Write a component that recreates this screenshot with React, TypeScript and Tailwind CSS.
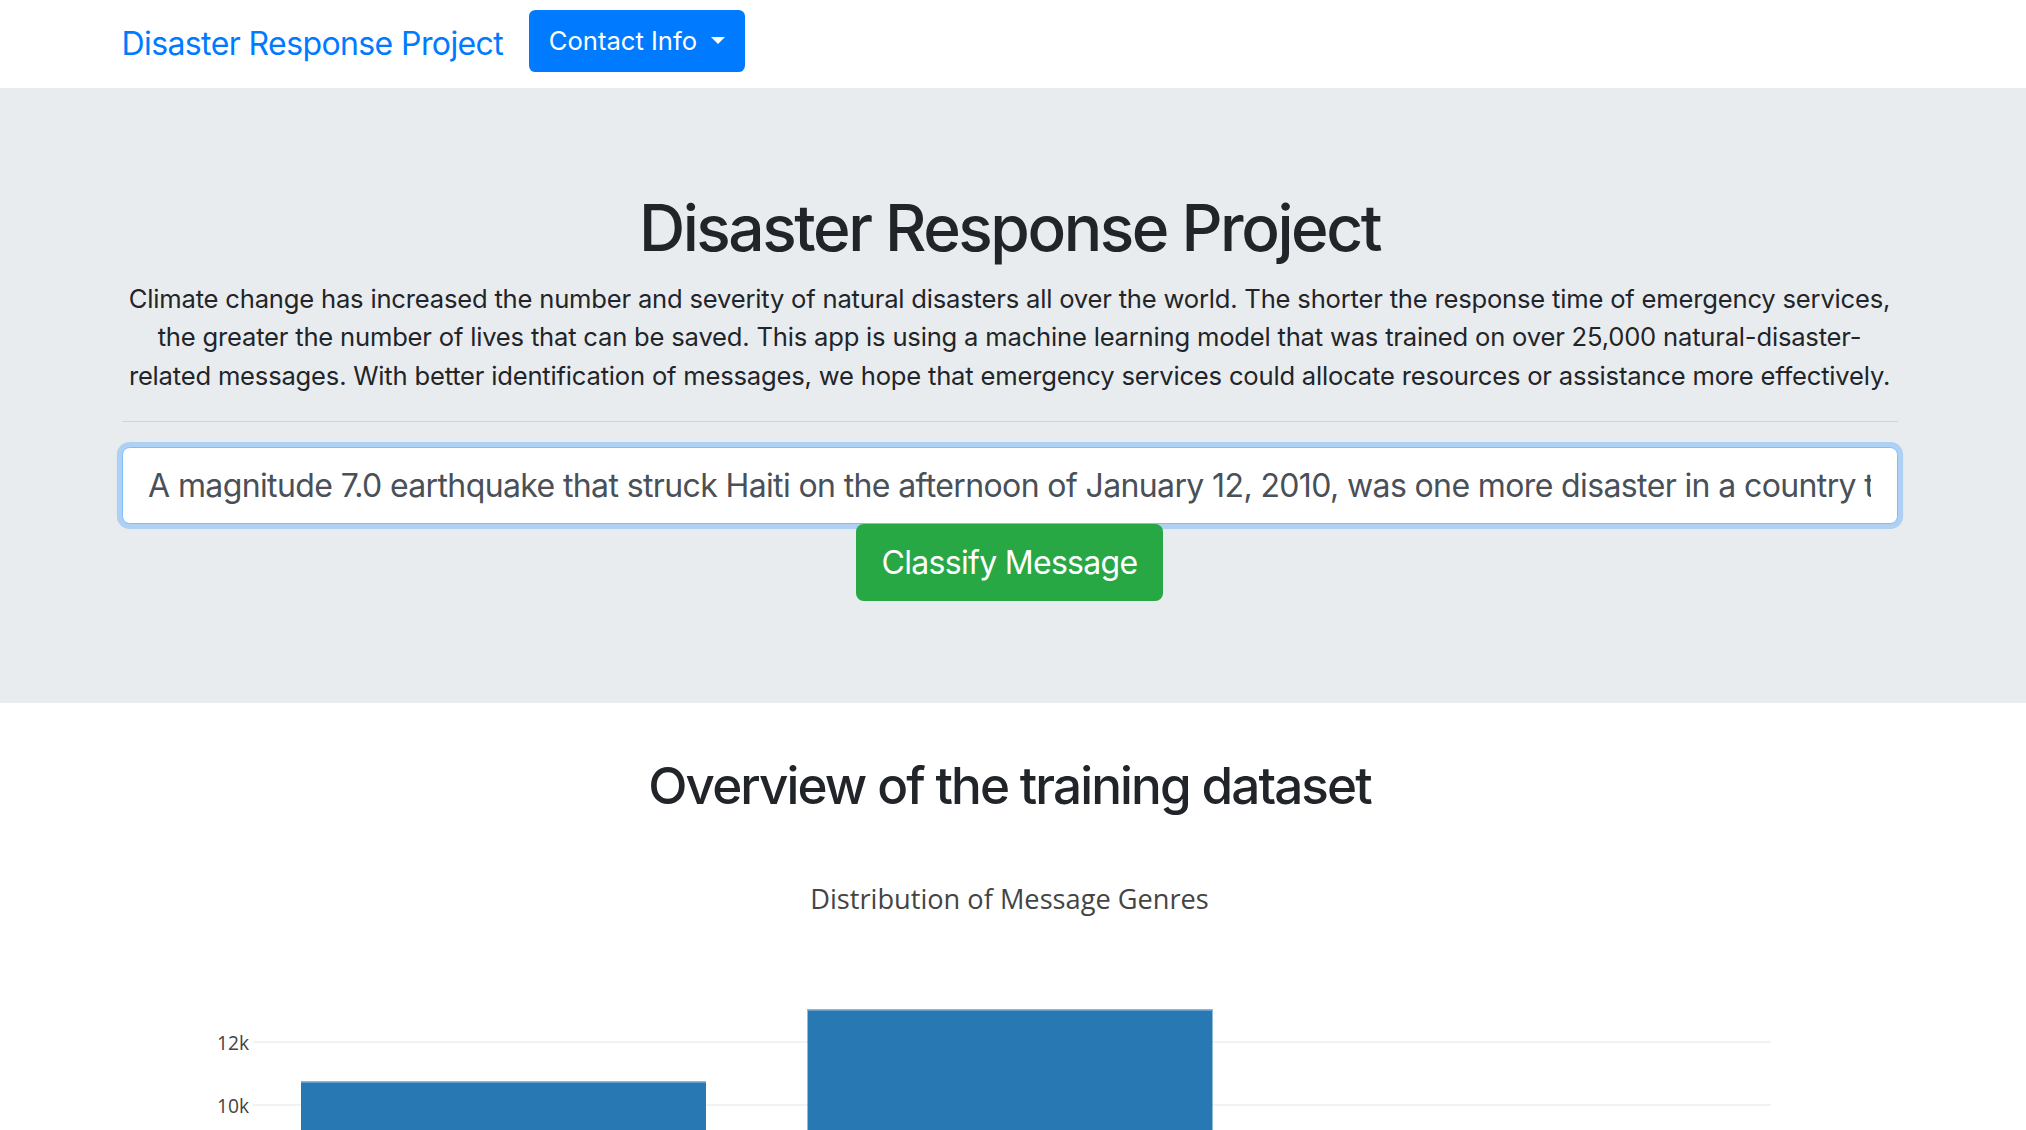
import { useState } from 'react';

const sans = 'font-["Inter","Liberation_Sans",sans-serif]';

const NavBar = () => {
  return (
    <nav className="h-[88px] bg-white pr-[7px]">
      <div className="mx-auto flex h-full w-[1776px] items-center">
        <a className={`${sans} mr-[25.6px] text-[32px] leading-[48px] tracking-[-0.6px] text-[#007bff]`} href="#">
          Disaster Response Project
        </a>
        <button className={`${sans} mb-[6px] flex h-[61.4px] items-center rounded-[6.4px] bg-[#007bff] px-[20px] text-[25.6px] text-white`}>
          Contact Info
          <span className="ml-[14px] inline-block h-0 w-0 border-x-[7.7px] border-t-[7.7px] border-x-transparent border-t-white" />
        </button>
      </div>
    </nav>
  );
};

const Hero = () => {
  const [msg, setMsg] = useState(
    'A magnitude 7.0 earthquake that struck Haiti on the afternoon of January 12, 2010, was one more disaster in a country that has suffered many.'
  );

  return (
    <section className="bg-[#e9ecef] pt-[102.4px] pr-[7px] pb-[102.4px]">
      <div className={`${sans} mx-auto w-[1776px] text-center text-[#212529]`}>
        <h1 className="mb-[12.8px] text-[64px] font-medium leading-[76.8px] tracking-[-2.45px]">Disaster Response Project</h1>
        <p className="mb-[25.6px] whitespace-nowrap text-[25.6px] leading-[38.4px] tracking-[-0.2px]">
          Climate change has increased the number and severity of natural disasters all over the world. The shorter the response time of emergency services,
          <br />
          the greater the number of lives that can be saved. This app is using a machine learning model that was trained on over 25,000 natural-disaster-
          <br />
          related messages. With better identification of messages, we hope that emergency services could allocate resources or assistance more effectively.
        </p>
        <hr className="mb-[25.6px] border-t-[1.6px] border-black/10" />
        <input
          className="block h-[76.8px] w-full rounded-[7.7px] border-[1.6px] border-[#80bdff] bg-white px-[25.6px] text-[32px] tracking-[-0.62px] text-[#495057] shadow-[0_0_0_5.12px_rgba(0,123,255,0.25)] outline-none"
          value={msg}
          onChange={(e) => setMsg(e.target.value)}
        />
        <button className="mx-auto block h-[76.8px] rounded-[7.7px] bg-[#28a745] px-[25.6px] text-[32px] tracking-[-0.7px] text-white">
          Classify Message
        </button>
      </div>
    </section>
  );
};

const GenreChart = () => {
  const bars = [
    { x: 179, top: 164 },
    { x: 685.5, top: 92 },
  ];

  return (
    <div className="w-full">
      <div className='pt-[51px] text-center font-["Open_Sans",sans-serif] text-[27.2px] leading-[37px] text-[#444]'>
        Distribution of Message Genres
      </div>
      <svg width="1776" height="215" className="block">
        <line x1="131" x2="1649" y1="125" y2="125" stroke="#eeeeee" strokeWidth="1.6" />
        <line x1="131" x2="1649" y1="188" y2="188" stroke="#eeeeee" strokeWidth="1.6" />
        {bars.map((b, i) => (
          <g key={i}>
            <rect x={b.x} y={b.top} width="405" height={215 - b.top} fill="#2778b3" />
            <rect x={b.x} y={b.top} width="405" height="1.6" fill="#8fb6d8" />
          </g>
        ))}
        <text x="127" y="133" textAnchor="end" fontFamily="Open Sans, sans-serif" fontSize="19.2" fill="#444">12k</text>
        <text x="127" y="196" textAnchor="end" fontFamily="Open Sans, sans-serif" fontSize="19.2" fill="#444">10k</text>
      </svg>
    </div>
  );
};

export default function App() {
  return (
    <div className="h-screen overflow-hidden bg-white">
      <NavBar />
      <Hero />
      <div className="mt-[51.2px] pr-[7px]">
        <div className="mx-auto w-[1776px]">
          <h2 className={`${sans} mb-[12.8px] text-center text-[51.2px] font-medium leading-[61.4px] tracking-[-1.9px] text-[#212529]`}>
            Overview of the training dataset
          </h2>
          <GenreChart />
        </div>
      </div>
    </div>
  );
}
